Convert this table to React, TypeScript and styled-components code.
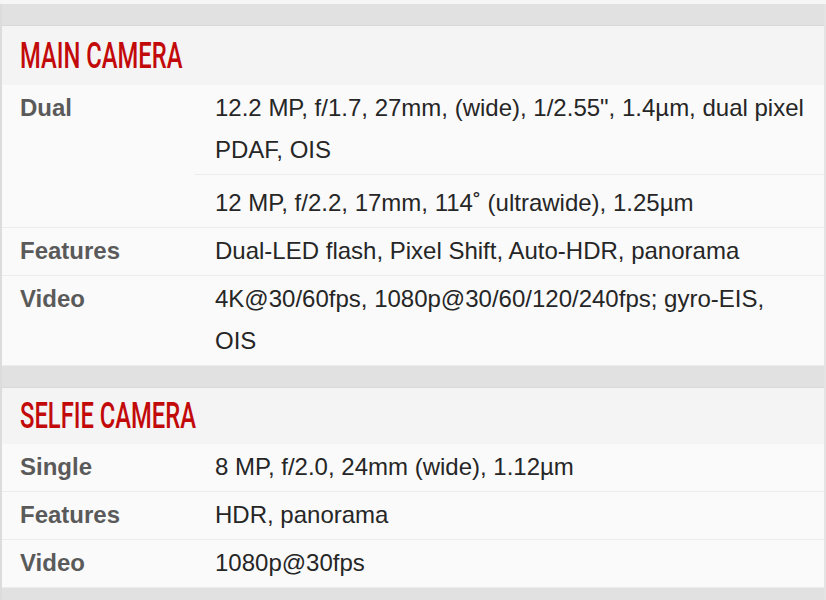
import styled, { createGlobalStyle } from 'styled-components'

const GlobalStyle = createGlobalStyle`
  body {
    margin: 0;
    background: #fafafa;
    font-family: 'Liberation Sans', Arial, sans-serif;
  }
`

const Page = styled.div`
  width: 826px;
  box-sizing: border-box;
  padding-top: 4px;
  background: #f6f6f6;
`

const Sheet = styled.div`
  border-left: 2px solid #dcdcdc;
  border-right: 2px solid #e4e4e4;
  background: #fafafa;
`

const Band = styled.div<{ h: number }>`
  height: ${(p) => p.h}px;
  background: #e1e1e1;
  border-bottom: 1px solid #d9d9d9;
`

const Header = styled.div<{ h: number }>`
  height: ${(p) => p.h}px;
  display: flex;
  align-items: center;
  padding-left: 18px;
  background: #f4f4f4;
`

const Title = styled.h2`
  margin: 0;
  display: inline-block;
  font-family: Roboto, 'Liberation Sans', sans-serif;
  font-weight: 500;
  font-size: 36px;
  color: #c30a0a;
  transform: scaleX(0.66);
  transform-origin: left center;
  white-space: nowrap;
`

const Row = styled.div`
  display: grid;
  grid-template-columns: 193px 1fr;
  border-bottom: 1px solid #ececec;
  background: #fafafa;
`

const Label = styled.div`
  padding: 2px 0 3px 18px;
  line-height: 42px;
  font-size: 24px;
  font-weight: 700;
  color: #5a5a5a;
`

const Values = styled.div`
  display: flex;
  flex-direction: column;
`

const Value = styled.div`
  padding: 2px 12px 3px 20px;
  line-height: 42px;
  font-size: 24px;
  color: #262626;
  & + & {
    border-top: 1px solid #ececec;
    padding-top: 7px;
    padding-bottom: 3px;
  }
`

type Spec = { label: string; values: string[] }

const mainCamera: Spec[] = [
  {
    label: 'Dual',
    values: [
      '12.2 MP, f/1.7, 27mm, (wide), 1/2.55", 1.4µm, dual pixel PDAF, OIS',
      '12 MP, f/2.2, 17mm, 114˚ (ultrawide), 1.25µm',
    ],
  },
  { label: 'Features', values: ['Dual-LED flash, Pixel Shift, Auto-HDR, panorama'] },
  { label: 'Video', values: ['4K@30/60fps, 1080p@30/60/120/240fps; gyro-EIS, OIS'] },
]

const selfieCamera: Spec[] = [
  { label: 'Single', values: ['8 MP, f/2.0, 24mm (wide), 1.12µm'] },
  { label: 'Features', values: ['HDR, panorama'] },
  { label: 'Video', values: ['1080p@30fps'] },
]

type SectionProps = { title: string; specs: Spec[]; band: number; head: number }

const Section = ({ title, specs, band, head }: SectionProps) => (
  <>
    <Band h={band} />
    <Header h={head}>
      <Title>{title}</Title>
    </Header>
    {specs.map((s) => (
      <Row key={s.label}>
        <Label>{s.label}</Label>
        <Values>
          {s.values.map((v) => (
            <Value key={v}>{v}</Value>
          ))}
        </Values>
      </Row>
    ))}
  </>
)

const App = () => (
  <Page>
    <GlobalStyle />
    <Sheet>
      <Section title="MAIN CAMERA" specs={mainCamera} band={21} head={59} />
      <Section title="SELFIE CAMERA" specs={selfieCamera} band={21} head={56} />
      <Band h={30} />
    </Sheet>
  </Page>
)

export default App
